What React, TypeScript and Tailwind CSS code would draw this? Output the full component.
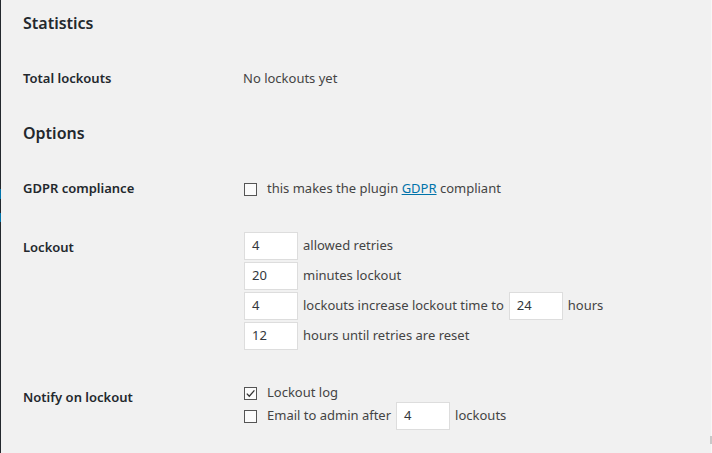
import React from 'react';

const FONT = '"Noto Sans", "Open Sans", "Liberation Sans", sans-serif';

function Checkbox({ checked }: { checked?: boolean }) {
  return (
    <span className="inline-flex h-[13px] w-[13px] shrink-0 items-center justify-center border border-[#555] bg-[#fbfbfb]">
      {checked && (
        <svg width="11" height="11" viewBox="0 0 11 11" fill="none">
          <path d="M1.8 5.6 L4.3 8.2 L9.4 2.4" stroke="#333" strokeWidth="1.3" />
        </svg>
      )}
    </span>
  );
}

function NumInput({ value }: { value: string }) {
  return (
    <span className="inline-flex h-[28px] w-[54px] shrink-0 items-center border border-[#ddd] bg-white pl-[7px] text-[13px] text-[#32373c]">
      {value}
    </span>
  );
}

function Heading({ children, h }: { children: React.ReactNode; h: string }) {
  return (
    <div className={`flex items-center pt-px text-[16px] font-semibold text-[#23282d] ${h}`}>{children}</div>
  );
}

export default function App() {
  return (
    <div className="relative flex h-[453px] w-full bg-[#f1f1f1] text-[13px] text-[#444]" style={{ fontFamily: FONT }}>
      {/* admin menu edge */}
      <div className="flex w-px shrink-0 flex-col">
        <div className="h-[189px] bg-[#23282d]" />
        <div className="h-[10px] bg-[#0073aa]" />
        <div className="h-[14px] bg-[#23282d]" />
        <div className="h-[9px] bg-[#0073aa]" />
        <div className="flex-1 bg-[#23282d]" />
      </div>

      <div className="flex flex-1 flex-col pl-[22px]">
        <Heading h="h-[44px]">Statistics</Heading>

        <div className="flex h-[68px] items-center pt-[2px]">
          <div className="w-[220px] font-semibold text-[#23282d]">Total lockouts</div>
          <div>No lockouts yet</div>
        </div>

        <Heading h="h-[40px]">Options</Heading>

        <div className="flex h-[72px] items-center pt-[2px]">
          <div className="w-[221px] font-semibold text-[#23282d]">GDPR compliance</div>
          <label className="flex items-center gap-[10px]">
            <Checkbox />
            <span>
              this makes the plugin{' '}
              <a className="text-[#0073aa] underline">GDPR</a> compliant
            </span>
          </label>
        </div>

        <div className="flex pt-[8px]">
          <div className="flex h-[28px] w-[221px] items-center pt-[3px] font-semibold text-[#23282d]">Lockout</div>
          <div className="flex flex-col gap-[2px]">
            <div className="flex items-center gap-[5px]">
              <NumInput value="4" />
              <span>allowed retries</span>
            </div>
            <div className="flex items-center gap-[5px]">
              <NumInput value="20" />
              <span>minutes lockout</span>
            </div>
            <div className="flex items-center gap-[5px]">
              <NumInput value="4" />
              <span>lockouts increase lockout time to</span>
              <NumInput value="24" />
              <span>hours</span>
            </div>
            <div className="flex items-center gap-[5px]">
              <NumInput value="12" />
              <span>hours until retries are reset</span>
            </div>
          </div>
        </div>

        <div className="flex pt-[34px]">
          <div className="w-[221px] pt-[4px] font-semibold text-[#23282d]">Notify on lockout</div>
          <div className="flex flex-col">
            <label className="flex h-[18px] items-center gap-[10px]">
              <Checkbox checked />
              <span>Lockout log</span>
            </label>
            <label className="flex items-center gap-[10px]">
              <Checkbox />
              <span className="flex items-center gap-[5px]">
                Email to admin after
                <NumInput value="4" />
                lockouts
              </span>
            </label>
          </div>
        </div>
      </div>

      <div className="w-px shrink-0 bg-[#f7f7f7]" />
      <div className="absolute bottom-[9px] right-0 h-[8px] w-[2px] bg-[#c8c8c8]" />
    </div>
  );
}
